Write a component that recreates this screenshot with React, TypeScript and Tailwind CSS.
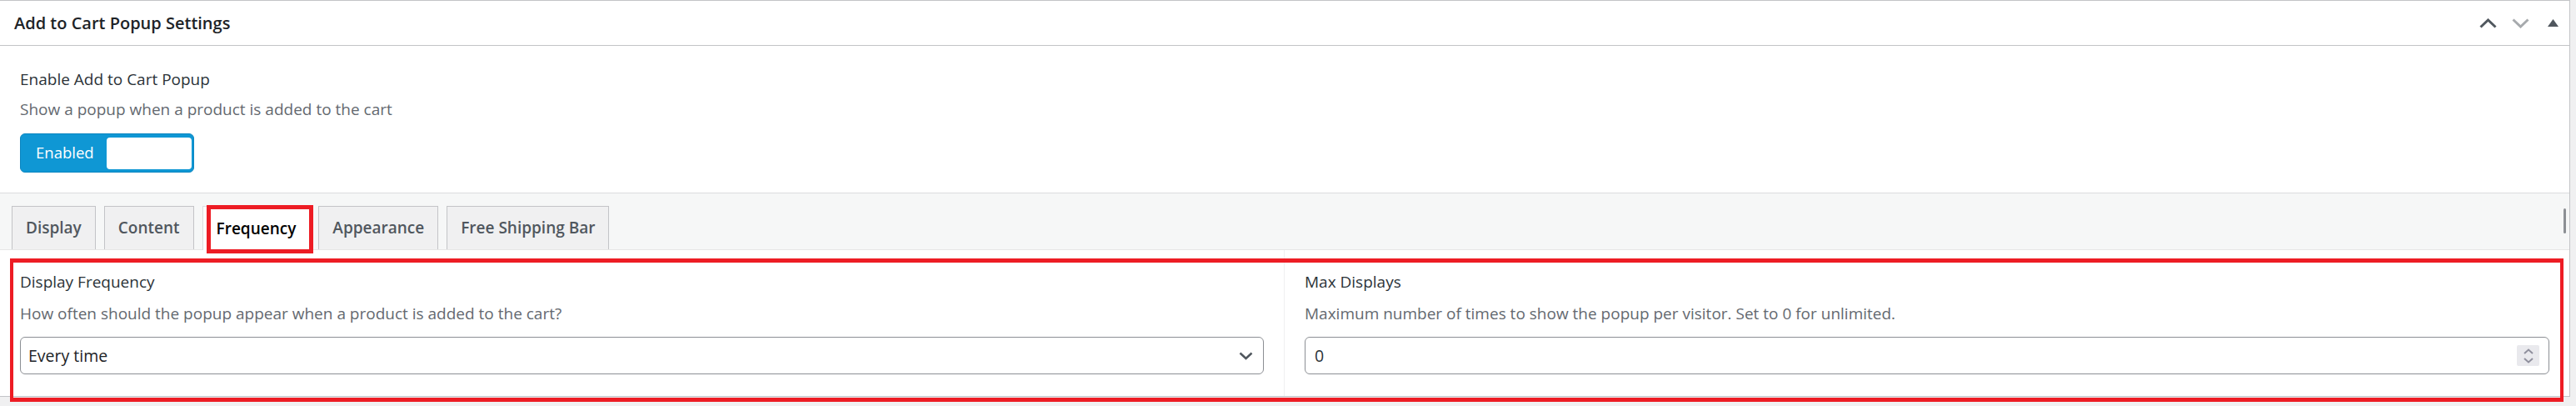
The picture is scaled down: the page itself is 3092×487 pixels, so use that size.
const tabs = ["Display", "Content", "Frequency", "Appearance", "Free Shipping Bar"];

function Chevron({ up, className }: { up?: boolean; className: string }) {
  return (
    <svg width="21" height="12" viewBox="0 0 21 12" className={className}>
      <polyline
        points={up ? "1.5,10.5 10.5,2 19.5,10.5" : "1.5,1.5 10.5,10 19.5,1.5"}
        fill="none"
        stroke="currentColor"
        strokeWidth="3"
      />
    </svg>
  );
}

function HeaderActions() {
  return (
    <div className="flex h-full items-center">
      <button className="flex h-full w-[39px] items-center justify-center text-[#50575e]">
        <Chevron up className="" />
      </button>
      <button className="flex h-full w-[39px] items-center justify-center text-[#a7aaad]">
        <Chevron className="" />
      </button>
      <button className="flex h-full w-[39px] items-center justify-center text-[#50575e]">
        <svg width="13" height="9" viewBox="0 0 13 9">
          <polygon points="6.5,0 13,9 0,9" fill="currentColor" />
        </svg>
      </button>
    </div>
  );
}

function Toggle() {
  return (
    <div className="flex h-[47px] w-[209px] items-center rounded-[6px] border border-[#0b86c1] bg-[#0f97d4]">
      <span className="flex-1 pl-[18px] text-[18.5px] leading-none text-white">Enabled</span>
      <div className="mr-[2px] h-[38px] w-[102px] rounded-[4px] bg-white" />
    </div>
  );
}

function Field({
  label,
  help,
  children,
  divider,
}: {
  label: string;
  help: string;
  children: React.ReactNode;
  divider?: boolean;
}) {
  return (
    <div className={`px-6 pt-6 pb-[26px] ${divider ? "border-r border-[#f0f0f1]" : ""}`}>
      <div className="text-[19px] leading-[28px] text-[#2c3338]">{label}</div>
      <div className="mt-[10px] text-[19px] leading-[28px] text-[#646970]">{help}</div>
      <div className="mt-[14px]">{children}</div>
    </div>
  );
}

export default function App() {
  return (
    <div className="h-[487px] w-[3092px] bg-[#f0f0f1] font-['Open_Sans',sans-serif]">
      <div className="w-[3085px] border-t border-r border-b border-[#c3c4c7] bg-white">
        {/* header */}
        <div className="flex h-[54px] items-center justify-between border-b border-[#c3c4c7]">
          <h2 className="pl-[17px] text-[20px] font-semibold leading-[53px] text-[#1d2327]">
            Add to Cart Popup Settings
          </h2>
          <HeaderActions />
        </div>

        {/* enable toggle */}
        <div className="border-b border-[#dcdcde] px-6 pt-[26px] pb-6">
          <div className="text-[19px] leading-[28px] text-[#2c3338]">Enable Add to Cart Popup</div>
          <div className="mt-2 text-[19px] leading-[28px] text-[#646970]">
            Show a popup when a product is added to the cart
          </div>
          <div className="mt-[15px]">
            <Toggle />
          </div>
        </div>

        {/* tabs */}
        <div className="flex h-[68px] items-end border-b border-[#e6e6e6] bg-[#f6f7f7] pl-[14px]">
          <div className="flex items-end gap-[10px]">
            {tabs.map((t) =>
              t === "Frequency" ? (
                <div
                  key={t}
                  className="relative -mb-px flex h-[53px] items-center border border-b-0 border-[#dcdcde] bg-white px-4 text-[19px] font-semibold text-black"
                >
                  {t}
                  <div className="pointer-events-none absolute -top-[2px] left-[4px] h-[58px] w-[128px] border-[5px] border-[#ed1c24]" />
                </div>
              ) : (
                <div
                  key={t}
                  className="flex h-[52px] items-center border border-b-0 border-[#c3c4c7] bg-[#f0f0f1] px-4 text-[19px] font-semibold text-[#50575e]"
                >
                  {t}
                </div>
              )
            )}
          </div>
          <div className="mr-[4px] mb-[19px] ml-auto h-[30px] w-[3px] rounded-full bg-[#8c8f94]" />
        </div>

        {/* frequency panel */}
        <div className="relative grid grid-cols-2">
          <Field label="Display Frequency" help="How often should the popup appear when a product is added to the cart?" divider>
            <div className="flex h-[45px] items-center justify-between rounded-[6px] border border-[#8c8f94] pr-[12px] pl-[9px]">
              <span className="text-[19.5px] text-[#1d2327]">Every time</span>
              <svg width="17" height="10" viewBox="0 0 17 10">
                <polyline points="1.5,1.5 8.5,8 15.5,1.5" fill="none" stroke="#50575e" strokeWidth="2.5" />
              </svg>
            </div>
          </Field>
          <Field label="Max Displays" help="Maximum number of times to show the popup per visitor. Set to 0 for unlimited.">
            <div className="flex h-[45px] items-center justify-between rounded-[6px] border border-[#8c8f94] pr-[11px] pl-[11px]">
              <span className="text-[19.5px] text-[#2c3338]">0</span>
              <div className="flex h-[25px] w-[27px] flex-col items-center justify-center gap-[4px] rounded-[2px] bg-[#e9e9ed]">
                <svg width="12" height="7" viewBox="0 0 12 7">
                  <polyline points="1,6 6,1.5 11,6" fill="none" stroke="#8f8f9d" strokeWidth="2" />
                </svg>
                <svg width="12" height="7" viewBox="0 0 12 7">
                  <polyline points="1,1 6,5.5 11,1" fill="none" stroke="#8f8f9d" strokeWidth="2" />
                </svg>
              </div>
            </div>
          </Field>
          <div className="pointer-events-none absolute top-[10px] right-[7px] -bottom-[7px] left-[12px] border-x-4 border-y-[5px] border-[#ed1c24]" />
        </div>
      </div>
    </div>
  );
}
